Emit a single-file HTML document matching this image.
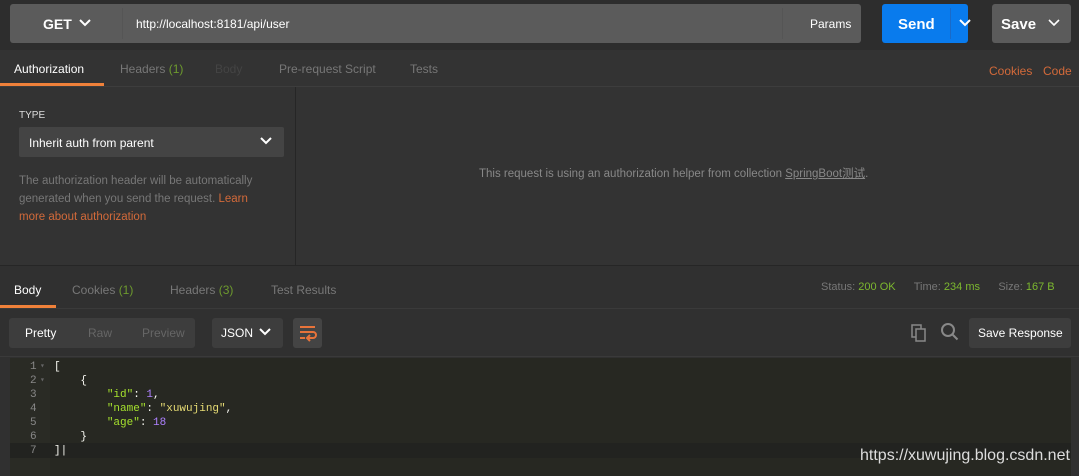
<!DOCTYPE html>
<html><head><meta charset="utf-8"><style>
*{margin:0;padding:0;box-sizing:border-box}
body{width:1079px;height:476px;background:#333;font-family:"Liberation Sans","Noto Sans CJK SC",sans-serif;font-size:12px;color:#ccc;position:relative;overflow:hidden}
.a{position:absolute}
.mono{font-family:"Liberation Mono","DejaVu Sans Mono",monospace;font-size:11px}
</style></head><body>
<div class="a" style="left:0;top:0;width:1079px;height:50px;background:#2d2d2d"></div>
<div class="a" style="left:10px;top:4px;width:851px;height:39px;background:#5b5b5b;border-radius:3px"></div>
<div class="a" style="left:43px;top:16px;color:#fff;font-size:14px;font-weight:bold">GET</div>
<svg class="a" style="left:78px;top:18px" width="14" height="10"><path d="M2 2l5 5 5-5" stroke="#fff" stroke-width="2" fill="none"/></svg>
<div class="a" style="left:122px;top:8px;width:1px;height:31px;background:#555"></div>
<div class="a" style="left:136px;top:17px;color:#fff;font-size:12px">http://localhost:8181/api/user</div>
<div class="a" style="left:782px;top:8px;width:1px;height:31px;background:#555"></div>
<div class="a" style="left:810px;top:17px;color:#fff;font-size:12px">Params</div>
<div class="a" style="left:882px;top:4px;width:86px;height:39px;background:#097bed;border-radius:3px"></div>
<div class="a" style="left:898px;top:16px;color:#fff;font-size:15px;font-weight:bold">Send</div>
<div class="a" style="left:950px;top:8px;width:1px;height:31px;background:#1a6ac8"></div>
<svg class="a" style="left:958px;top:18px" width="14" height="10"><path d="M2 2l5 5 5-5" stroke="#fff" stroke-width="2" fill="none"/></svg>
<div class="a" style="left:992px;top:4px;width:79px;height:39px;background:#5b5b5b;border-radius:3px"></div>
<div class="a" style="left:1001px;top:16px;color:#fff;font-size:15px;font-weight:bold">Save</div>
<svg class="a" style="left:1047px;top:18px" width="14" height="10"><path d="M2 2l5 5 5-5" stroke="#fff" stroke-width="1.6" fill="none"/></svg>

<div class="a" style="left:0;top:50px;width:1079px;height:36px;background:#333"></div>
<div class="a" style="left:14px;top:62px;color:#fff;font-size:12px">Authorization</div>
<div class="a" style="left:0;top:83px;width:104px;height:3px;background:#f0813a"></div>
<div class="a" style="left:120px;top:62px;color:#777">Headers <span style="color:#6d9a2e">(1)</span></div>
<div class="a" style="left:215px;top:62px;color:#444">Body</div>
<div class="a" style="left:279px;top:62px;color:#777">Pre-request Script</div>
<div class="a" style="left:410px;top:62px;color:#777">Tests</div>
<div class="a" style="left:989px;top:64px;color:#d36a3a">Cookies</div>
<div class="a" style="left:1043px;top:64px;color:#d36a3a">Code</div>
<div class="a" style="left:0;top:86px;width:1079px;height:1px;background:#3d3d3d"></div>

<div class="a" style="left:295px;top:87px;width:1px;height:178px;background:#262626"></div>
<div class="a" style="left:19px;top:110px;color:#ddd;font-size:10px">TYPE</div>
<div class="a" style="left:19px;top:127px;width:265px;height:30px;background:#444;border-radius:2px"></div>
<div class="a" style="left:29px;top:136px;color:#fff;font-size:12px">Inherit auth from parent</div>
<svg class="a" style="left:259px;top:136px" width="14" height="10"><path d="M2 2l5 5 5-5" stroke="#fff" stroke-width="2" fill="none"/></svg>
<div class="a" style="left:19px;top:172px;width:256px;color:#777;font-size:11.5px;line-height:18px">The authorization header will be automatically generated when you send the request. <span style="color:#d36a3a">Learn more about authorization</span></div>
<div class="a" style="left:479px;top:165px;color:#888;font-size:11.5px">This request is using an authorization helper from collection <u>SpringBoot测试</u>.</div>

<div class="a" style="left:0;top:265px;width:1079px;height:1px;background:#262626"></div>
<div class="a" style="left:0;top:266px;width:1079px;height:210px;background:#303030"></div>
<div class="a" style="left:14px;top:283px;color:#fff">Body</div>
<div class="a" style="left:0;top:305px;width:56px;height:3px;background:#f0813a"></div>
<div class="a" style="left:72px;top:283px;color:#777">Cookies <span style="color:#6d9a2e">(1)</span></div>
<div class="a" style="left:170px;top:283px;color:#777">Headers <span style="color:#6d9a2e">(3)</span></div>
<div class="a" style="left:271px;top:283px;color:#777">Test Results</div>
<div class="a" style="left:821px;top:281px;font-size:11px;color:#777;white-space:pre">Status: <span style="color:#7cb82f">200 OK</span>      Time: <span style="color:#7cb82f">234 ms</span>      Size: <span style="color:#7cb82f">167 B</span></div>
<div class="a" style="left:0;top:308px;width:1079px;height:1px;background:#3a3a3a"></div>

<div class="a" style="left:9px;top:318px;width:186px;height:30px;background:#3d3d3d;border-radius:3px"></div>
<div class="a" style="left:25px;top:326px;color:#fff">Pretty</div>
<div class="a" style="left:88px;top:326px;color:#666">Raw</div>
<div class="a" style="left:142px;top:326px;color:#666">Preview</div>
<div class="a" style="left:212px;top:318px;width:71px;height:30px;background:#3d3d3d;border-radius:3px"></div>
<div class="a" style="left:221px;top:326px;color:#fff">JSON</div>
<svg class="a" style="left:258px;top:327px" width="14" height="10"><path d="M2 2l5 5 5-5" stroke="#fff" stroke-width="2" fill="none"/></svg>
<div class="a" style="left:293px;top:318px;width:29px;height:30px;background:#444;border-radius:3px"></div>
<svg class="a" style="left:298px;top:323px" width="20" height="20"><path d="M2 4h15M2 9h13a3 3 0 0 1 0 6h-5M12 12l-3 3 3 3M2 15h5" stroke="#e8733a" stroke-width="2" fill="none"/></svg>
<svg class="a" style="left:910px;top:322px" width="20" height="22"><rect x="2" y="3" width="9" height="12" fill="none" stroke="#888" stroke-width="1.5"/><rect x="6" y="7" width="9" height="12" fill="#303030" stroke="#888" stroke-width="1.5"/></svg>
<svg class="a" style="left:940px;top:322px" width="20" height="20"><circle cx="8" cy="8" r="6" stroke="#888" stroke-width="2" fill="none"/><path d="M12.5 12.5l5 5" stroke="#888" stroke-width="2"/></svg>
<div class="a" style="left:969px;top:318px;width:102px;height:30px;background:#3d3d3d;border-radius:3px"></div>
<div class="a" style="left:978px;top:326px;color:#fff">Save Response</div>
<div class="a" style="left:0;top:356px;width:1079px;height:1px;background:#3a3a3a"></div>

<div class="a" style="left:10px;top:358px;width:1061px;height:118px;background:#272822"></div>
<div class="a" style="left:10px;top:358px;width:40px;height:118px;background:#2a2b25"></div>
<div class="a" style="left:10px;top:443px;width:1061px;height:15px;background:#222320"></div>
<div class="a mono" style="left:30px;top:360px;color:#888;line-height:14px">1<br>2<br>3<br>4<br>5<br>6<br>7</div>
<div class="a mono" style="left:40px;top:360px;color:#666;line-height:14px;font-size:8px">▾<br>▾</div>
<div class="a mono" style="left:54px;top:360px;color:#f8f8f2;line-height:14px;white-space:pre">[
    {
        <span style="color:#a6e22e">"id"</span>: <span style="color:#ae81ff">1</span>,
        <span style="color:#a6e22e">"name"</span>: <span style="color:#e6db74">"xuwujing"</span>,
        <span style="color:#a6e22e">"age"</span>: <span style="color:#ae81ff">18</span>
    }
]|</div>
<div class="a" style="left:860px;top:447px;color:#ddd;font-size:16px">https://xuwujing.blog.csdn.net</div>
</body></html>
